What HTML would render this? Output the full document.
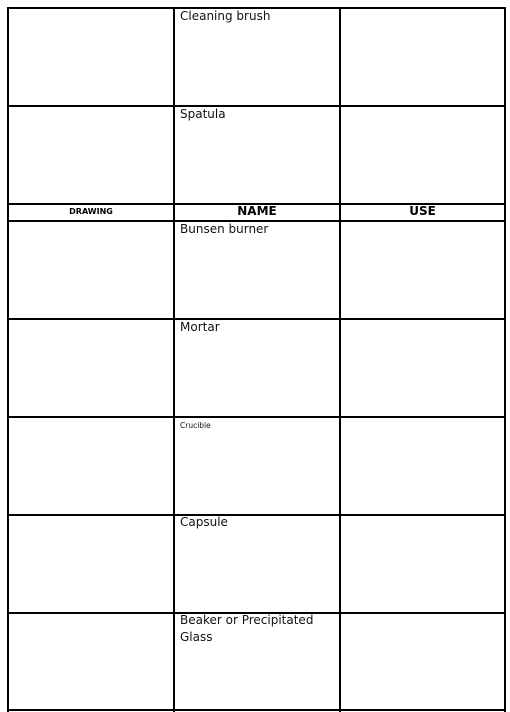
<!DOCTYPE html>
<html><head><style>
body{margin:0;width:510px;height:712px;background:#fff;position:relative;overflow:hidden;font-family:"DejaVu Sans","Liberation Sans",sans-serif;}
.h{position:absolute;left:7px;width:499px;height:2px;background:#000}
.v{position:absolute;top:7px;height:705px;width:2px;background:#000}
.t{position:absolute;left:180px;font-size:12px;color:#111;line-height:17px}
.c{position:absolute;text-align:center;font-weight:bold;color:#000}
</style></head><body>
<div class="h" style="top:7px"></div>
<div class="h" style="top:105px"></div>
<div class="h" style="top:203px"></div>
<div class="h" style="top:220px"></div>
<div class="h" style="top:318px"></div>
<div class="h" style="top:416px"></div>
<div class="h" style="top:514px"></div>
<div class="h" style="top:612px"></div>
<div class="h" style="top:709px"></div>
<div class="v" style="left:7px"></div>
<div class="v" style="left:173px"></div>
<div class="v" style="left:339px"></div>
<div class="v" style="left:504px"></div>
<div class="t" style="top:8px">Cleaning brush</div>
<div class="t" style="top:106px">Spatula</div>
<div class="c" style="left:9px;width:164px;top:207px;font-size:8px">DRAWING</div>
<div class="c" style="left:175px;width:164px;top:204px;font-size:12px">NAME</div>
<div class="c" style="left:341px;width:163px;top:204px;font-size:12px">USE</div>
<div class="t" style="top:221px">Bunsen burner</div>
<div class="t" style="top:319px">Mortar</div>
<div class="t" style="top:421px;font-size:7.5px;line-height:10px">Crucible</div>
<div class="t" style="top:514px">Capsule</div>
<div class="t" style="top:612px">Beaker or Precipitated<br>Glass</div>
</body></html>
